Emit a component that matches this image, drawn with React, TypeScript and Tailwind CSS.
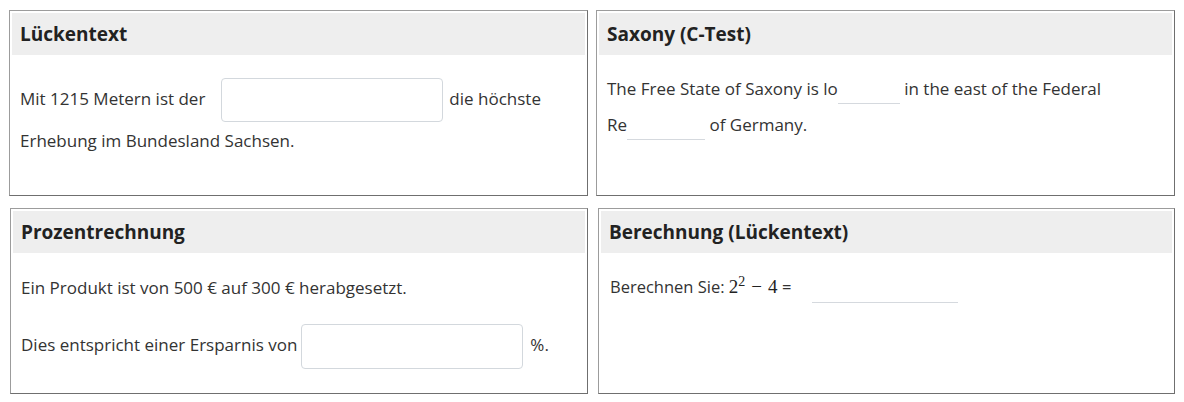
import type { ReactNode } from "react";

function Panel({ title, children, className }: { title: string; children: ReactNode; className?: string }) {
  return (
    <div
      className={
        "h-[186px] border border-[#9c9c9c] border-r-[#6f6f6f] border-b-[#6f6f6f] bg-white p-[2px] " +
        (className ?? "")
      }
    >
      <div className="flex h-[42px] items-center bg-[#eeeeee] px-[8px] text-[19px] font-bold text-[#222]">
        {title}
      </div>
      {children}
    </div>
  );
}

// boxed input used by the classic cloze questions
function BoxInput({ className }: { className?: string }) {
  return (
    <input
      type="text"
      className={
        "inline-block h-[44px] w-[222px] rounded-[4px] border border-[#d3d8dd] bg-white align-middle outline-none " +
        (className ?? "")
      }
    />
  );
}

// underline-only gap (C-Test / calculation)
function GapInput({ w }: { w: string }) {
  return (
    <input
      type="text"
      className={`inline-block h-[28px] ${w} border-0 border-b border-[#d5d9de] bg-transparent align-middle outline-none`}
    />
  );
}

export default function App() {
  return (
    <div
      className="h-[402px] w-[1184px] bg-white pl-[9px] pt-[10px] text-[17px] text-[#333]"
      style={{ fontFamily: '"Open Sans", "Noto Sans", sans-serif' }}
    >
      <div className="grid grid-cols-[579px_579px] gap-x-[8px] gap-y-[12px]">
        <Panel title="Lückentext">
          <div className="px-[8px] pt-[19px] leading-[30px]">
            Mit 1215 Metern ist der
            <BoxInput className="my-[4px] ml-[16px] mr-[6px]" />
            die höchste Erhebung im Bundesland Sachsen.
          </div>
        </Panel>

        <Panel title="Saxony (C-Test)">
          <div className="px-[8px] pt-[16px] leading-[36px]">
            The Free State of Saxony is lo
            <GapInput w="w-[62px]" /> in the east of the Federal{" "}
            <span className="whitespace-nowrap">
              Re
              <GapInput w="w-[78px]" />
            </span>{" "}
            of Germany.
          </div>
        </Panel>

        <Panel title="Prozentrechnung" className="ml-[1px]">
          <div className="px-[8px] pt-[20px] leading-[30px]">
            <p>Ein Produkt ist von 500 € auf 300 € herabgesetzt.</p>
            <p className="mt-[19px] leading-[45px]">
              Dies entspricht einer Ersparnis von
              <BoxInput className="ml-[4px] mr-[7px] h-[45px] w-[221px]" />
              %.
            </p>
          </div>
        </Panel>

        <Panel title="Berechnung (Lückentext)" className="ml-[2px]">
          <div className="px-[9px] pt-[19px] text-[16.5px] leading-[30px]">
            Berechnen Sie:{" "}
            <span
              className="text-[19px] text-[#222]"
              style={{ fontFamily: '"Liberation Serif", "DejaVu Serif", serif' }}
            >
              2<sup className="text-[14px]">2</sup>
              <span className="mx-[6px]">−</span>4
            </span>{" "}
            =
            <span className="ml-[21px]">
              <GapInput w="w-[146px]" />
            </span>
          </div>
        </Panel>
      </div>
    </div>
  );
}
